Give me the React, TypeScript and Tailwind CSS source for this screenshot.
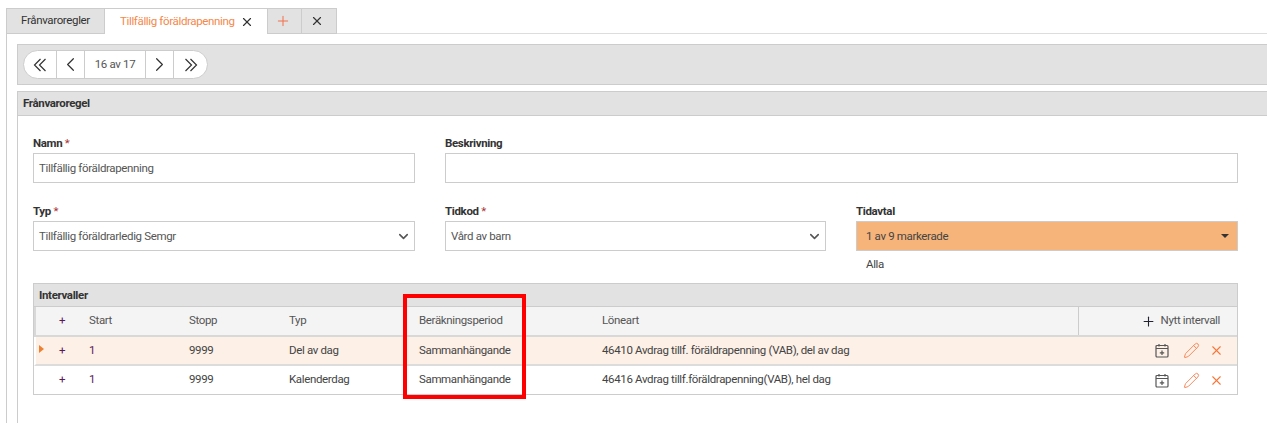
import { ChevronDown, ChevronLeft, ChevronRight, Pencil, Plus, X } from 'lucide-react';

const rows = [
  { typ: 'Del av dag', period: 'Sammanhängande', art: '46410 Avdrag tillf. föräldrapenning (VAB), del av dag', active: true },
  { typ: 'Kalenderdag', period: 'Sammanhängande', art: '46416 Avdrag tillf.föräldrapenning(VAB), hel dag', active: false },
];

function Label({ text, required }: { text: string; required?: boolean }) {
  return (
    <div className="h-[18px] font-bold leading-[16px] text-[#333]">
      {text}
      {required && <span className="font-normal text-[#a33]"> *</span>}
    </div>
  );
}

function Field({ value, select }: { value?: string; select?: boolean }) {
  return (
    <div className="flex h-[30px] items-center justify-between border border-[#ccc] bg-white pl-[5px] pr-[3px] text-[#555]">
      <span className="pt-[1px]">{value}</span>
      {select && <ChevronDown size={15} strokeWidth={2.5} className="text-[#555]" />}
    </div>
  );
}

function PagerCell({ children, className }: { children: React.ReactNode; className: string }) {
  return <div className={`flex items-center justify-center border-r border-[#ccc] last:border-r-0 ${className}`}>{children}</div>;
}

function DoubleChevron({ right }: { right?: boolean }) {
  return (
    <svg width="14" height="14" viewBox="0 0 14 14" fill="none" stroke="#333" strokeWidth="1.2" className={right ? 'rotate-180' : ''}>
      <path d="M7.5 1L1.5 7l6 6M12.5 1L6.5 7l6 6" />
    </svg>
  );
}

function CalendarIcon() {
  return (
    <svg width="14" height="15" viewBox="0 0 14 15" fill="none" stroke="#555" strokeWidth="1.2" className="mr-[14px]">
      <rect x="1" y="2.5" width="12" height="11.5" rx="1" />
      <path d="M1 5.5h12M4 1v2.5M10 1v2.5M7 7.5v4.5M4.8 9.8h4.4" />
    </svg>
  );
}

export default function App() {
  return (
    <div className="relative h-[423px] w-[1267px] overflow-hidden bg-white pt-[8px] font-['Roboto',sans-serif] text-[11.5px] tracking-[-0.35px] text-[#444]">
      {/* flikar */}
      <div className="flex h-[26px] pl-[6px]">
        <div className="flex w-[99px] items-center justify-center border border-[#ccc] bg-[#e2e2e2] text-[#333]">Frånvaroregler</div>
        <div className="flex w-[162px] items-center gap-[5px] border-t border-[#ccc] bg-white pl-[15px] text-[#f5874a]">
          Tillfällig föräldrapenning
          <X size={14} strokeWidth={2} className="text-[#333]" />
        </div>
        <div className="flex w-[35px] items-center justify-center border border-[#ccc] bg-[#e2e2e2] pr-[4px]">
          <Plus size={16} strokeWidth={1.5} className="text-[#f2704a]" />
        </div>
        <div className="flex w-[35px] items-center justify-center border border-l-0 border-[#ccc] bg-[#e2e2e2] pr-[4px]">
          <X size={14} strokeWidth={2} className="text-[#333]" />
        </div>
        <div className="flex-1 border-b border-[#ddd]" />
      </div>

      <div className="ml-[6px] h-[389px] border-l border-[#ccc] pl-[10px] pt-[10px]">
        {/* bläddring */}
        <div className="flex h-[41px] items-center border border-r-0 border-[#ccc] bg-[#e2e2e2] pl-[5px]">
          <div className="flex h-[29px] overflow-hidden rounded-full border border-[#ccc] bg-white">
            <PagerCell className="w-[33px]"><DoubleChevron /></PagerCell>
            <PagerCell className="w-[28px]"><ChevronLeft size={23} strokeWidth={1.25} className="text-[#333]" /></PagerCell>
            <PagerCell className="w-[61px] text-[#555]">16 av 17</PagerCell>
            <PagerCell className="w-[28px]"><ChevronRight size={23} strokeWidth={1.25} className="text-[#333]" /></PagerCell>
            <PagerCell className="w-[33px]"><DoubleChevron right /></PagerCell>
          </div>
        </div>

        {/* panel */}
        <div className="mt-[6px] h-full border-l border-[#ccc]">
          <div className="flex h-[25px] items-center border-y border-[#ccc] bg-[#e2e2e2] pl-[5px] font-bold text-[#333]">Frånvaroregel</div>

          <div className="w-[1220px] pl-[15px] pt-[19px]">
            <div className="flex gap-[30px]">
              <div className="w-[382px]">
                <Label text="Namn" required />
                <Field value="Tillfällig föräldrapenning" />
              </div>
              <div className="w-[793px]">
                <Label text="Beskrivning" />
                <Field />
              </div>
            </div>

            <div className="mt-[20px] flex gap-[30px]">
              <div className="w-[382px]">
                <Label text="Typ" required />
                <Field value="Tillfällig föräldrarledig Semgr" select />
              </div>
              <div className="w-[381px]">
                <Label text="Tidkod" required />
                <Field value="Vård av barn" select />
              </div>
              <div className="w-[382px]">
                <Label text="Tidavtal" />
                <div className="flex h-[30px] items-center justify-between border border-[#ccc] bg-[#f7b47a] pl-[9px] pr-[8px] text-[#444]">
                  <span className="pt-[1px]">1 av 9 markerade</span>
                  <span className="h-0 w-0 border-x-[4px] border-t-[4px] border-x-transparent border-t-[#333]" />
                </div>
                <div className="pl-[10px] pt-[6px] leading-[14px]">Alla</div>
              </div>
            </div>

            {/* intervaller */}
            <div className="mt-[12px] w-[1205px] border border-[#ccc]">
              <div className="flex h-[23px] items-center border-b border-[#ccc] bg-[#e2e2e2] pl-[5px] pt-[1px] font-bold text-[#333]">Intervaller</div>
              <div className="grid h-[30px] grid-cols-[53px_100px_100px_130px_183px_476px_159px] items-center border-b-2 border-l-2 border-[#d8d8d8] bg-[#f4f4f4] text-[#555]">
                <span className="pl-[23px] text-[#5a1a5a]">+</span>
                <span>Start</span>
                <span>Stopp</span>
                <span>Typ</span>
                <span>Beräkningsperiod</span>
                <span>Löneart</span>
                <div className="flex h-full items-center justify-end gap-[5px] border-l border-[#ccc] pr-[17px]">
                  <Plus size={15} strokeWidth={1.75} className="text-[#223]" />
                  Nytt intervall
                </div>
              </div>
              {rows.map((r) => (
                <div
                  key={r.art}
                  className={`grid grid-cols-[53px_100px_100px_130px_183px_476px_159px] items-center text-[#444] ${r.active ? 'h-[29px] border-b-2 border-l-2 border-[#dcdcdc] border-l-white bg-[#fdf0e7]' : 'h-[28px] border-l-2 border-white bg-white'}`}
                >
                  <span className="relative pl-[23px] text-[#5a1a5a]">
                    {r.active && <span className="absolute left-[3px] top-[3px] h-0 w-0 border-y-[4px] border-l-[5px] border-y-transparent border-l-[#f08030]" />}
                    +
                  </span>
                  <span className="text-[#5a1a5a]">1</span>
                  <span>9999</span>
                  <span>{r.typ}</span>
                  <span>{r.period}</span>
                  <span>{r.art}</span>
                  <div className="flex items-center justify-end pr-[13px]">
                    <CalendarIcon />
                    <Pencil size={17} strokeWidth={1.4} className="mr-[9px] text-[#f5875a]" />
                    <X size={15} strokeWidth={1.75} className="text-[#f5773a]" />
                  </div>
                </div>
              ))}
            </div>
          </div>
        </div>
      </div>

      {/* markering över tabellen */}
      <div className="absolute left-[403px] top-[294px] h-[105px] w-[123px] border-[4px] border-[#f00]" />
    </div>
  );
}
